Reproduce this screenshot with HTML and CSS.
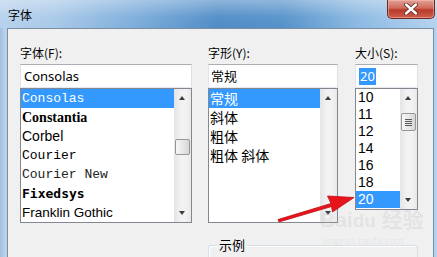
FILE: index.html
```html
<!DOCTYPE html>
<html lang="zh-CN">
<head>
    <meta charset="UTF-8">
    <title>字体</title>
    <link rel="stylesheet" href="styles.css">
</head>
<body>
    <div class="window">
        <div class="titlebar">
            <span class="title">字体</span>
            <div class="close">
                <svg width="16" height="12" viewBox="0 0 16 12">
                    <path d="M3 1.5 L13 10.5 M13 1.5 L3 10.5" stroke="#5a2a26" stroke-width="4" stroke-linecap="round"/>
                    <path d="M3 1.5 L13 10.5 M13 1.5 L3 10.5" stroke="#fff" stroke-width="2.4" stroke-linecap="round"/>
                </svg>
            </div>
        </div>

        <div class="frame">
            <div class="client">
                <div class="cols">
                    <div class="col col-font">
                        <div class="label">字体(F):</div>
                        <div class="textbox">Consolas</div>
                        <div class="listbox tall">
                            <ul class="items">
                                <li class="selected f-consolas">Consolas</li>
                                <li class="f-constantia">Constantia</li>
                                <li class="f-corbel">Corbel</li>
                                <li class="f-courier">Courier</li>
                                <li class="f-couriernew">Courier New</li>
                                <li class="f-fixedsys">Fixedsys</li>
                                <li class="f-franklin">Franklin Gothic</li>
                            </ul>
                            <div class="scrollbar">
                                <span class="arrow-up"></span>
                                <div class="track">
                                    <div class="thumb thumb-font"></div>
                                </div>
                                <span class="arrow-down"></span>
                            </div>
                        </div>
                    </div>

                    <div class="col col-style">
                        <div class="label">字形(Y):</div>
                        <div class="textbox cjk">常规</div>
                        <div class="listbox tall">
                            <ul class="items cjk-items">
                                <li class="selected">常规</li>
                                <li>斜体</li>
                                <li>粗体</li>
                                <li>粗体 斜体</li>
                            </ul>
                            <div class="scrollbar">
                                <span class="arrow-up"></span>
                                <div class="track"></div>
                                <span class="arrow-down"></span>
                            </div>
                        </div>
                    </div>

                    <div class="col col-size">
                        <div class="label">大小(S):</div>
                        <div class="textbox"><span class="sel-text">20</span></div>
                        <div class="listbox short">
                            <ul class="items size-items">
                                <li>10</li>
                                <li>11</li>
                                <li>12</li>
                                <li>14</li>
                                <li>16</li>
                                <li>18</li>
                                <li class="selected">20</li>
                            </ul>
                            <div class="scrollbar">
                                <span class="arrow-up"></span>
                                <div class="track">
                                    <div class="thumb thumb-size">
                                        <span></span><span></span><span></span><span></span>
                                    </div>
                                </div>
                                <span class="arrow-down"></span>
                            </div>
                        </div>
                    </div>
                </div>

                <div class="groupbox">
                    <span class="legend">示例</span>
                </div>
            </div>
        </div>

        <div class="watermark">
            <div class="wm-logo">Bai<span class="wm-du">du</span> 经验</div>
            <div class="wm-url">jingyan.baidu.com</div>
        </div>

        <svg class="red-arrow" width="437" height="257" viewBox="0 0 437 257">
            <path d="M278 219.5 L331 203.5 L327.5 196 L354 197.5 L332.5 212 L331.5 206.5 L279 222 Z" fill="#e8141c" stroke="#c00d12" stroke-width="0.8" stroke-linejoin="round"/>
        </svg>
    </div>
</body>
</html>
```

FILE: styles.css
```css
body {
    margin: 0;
    background: #f0f0f0;
}

.window {
    position: relative;
    width: 437px;
    height: 257px;
    overflow: hidden;
    display: flex;
    flex-direction: column;
    background: linear-gradient(to right, #b6d1ec, #a9c9e8 12%, #7eaedb 30%, #4f8cc6 50%, #5592ca 65%, #8bb9e2 82%, #b4d2ee);
    font-family: "Noto Sans CJK SC", "Noto Sans", sans-serif;
    font-size: 12px;
    color: #000;
}

.titlebar {
    height: 28px;
    flex-shrink: 0;
    display: flex;
    align-items: flex-start;
    justify-content: space-between;
    background: linear-gradient(to bottom, rgba(255, 255, 255, 0.35), rgba(255, 255, 255, 0.05) 60%, rgba(255, 255, 255, 0));
}

.title {
    padding: 7px 0 0 8px;
    line-height: 16px;
    font-size: 12px;
}

.close {
    width: 46px;
    height: 18px;
    margin-right: 2px;
    display: flex;
    align-items: center;
    justify-content: center;
    border: 1px solid #6d2a22;
    border-top: none;
    border-radius: 0 0 5px 5px;
    background: linear-gradient(to bottom, #e3a196, #cf6a5c 45%, #b93a2a 55%, #cf5e4c);
    box-shadow: inset 0 0 0 1px rgba(255, 200, 190, 0.45);
}

.frame {
    flex: 1;
    display: flex;
    padding: 0 3px 0 7px;
    background: linear-gradient(to right, #9fbfe1, #b9d3ec 5px, transparent 8px);
}

.client {
    flex: 1;
    background: #f0f0f0;
    border: 1px solid #7b8ea3;
    border-bottom: none;
    padding: 16px 0 0 12px;
}

.cols {
    display: flex;
    gap: 16px;
}

.col-font {
    width: 172px;
}

.col-style {
    width: 130px;
}

.col-size {
    width: 63px;
    margin-left: 1px;
}

.label {
    height: 16px;
    line-height: 16px;
    margin-bottom: 3px;
}

.textbox {
    height: 24px;
    box-sizing: border-box;
    border: 1px solid #abadb3;
    border-color: #abadb3 #dbdfe6 #e3e9ef #e2e3ea;
    background: #fff;
    padding: 0 3px;
    line-height: 22px;
    font-family: "Noto Sans", "Noto Sans CJK SC", sans-serif;
    font-size: 13px;
}

.textbox.cjk {
    font-family: "Noto Sans CJK SC", sans-serif;
    padding-left: 2px;
}

.sel-text {
    display: inline-block;
    background: #3399ff;
    color: #fff;
    line-height: 17px;
    padding: 0 1px;
}

.listbox {
    display: flex;
    box-sizing: border-box;
    border: 1px solid #828790;
    background: #fff;
}

.listbox.tall {
    height: 135px;
}

.listbox.short {
    height: 122px;
}

.items {
    flex: 1;
    list-style: none;
    margin: 0;
    padding: 0;
    overflow: hidden;
}

.items li {
    height: 19px;
    line-height: 19px;
    padding-left: 1px;
    white-space: nowrap;
}

.items li.selected {
    background: #3399ff;
    color: #fff;
}

.f-consolas {
    font-family: "Liberation Mono", monospace;
    font-size: 13px;
}

.f-constantia {
    font-family: "Liberation Serif", serif;
    font-size: 14px;
    font-weight: bold;
}

.f-corbel {
    font-family: "Liberation Sans", sans-serif;
    font-size: 14px;
}

.f-courier {
    font-family: "Liberation Mono", monospace;
    font-size: 13px;
}

.f-couriernew {
    font-family: "Liberation Mono", monospace;
    font-size: 13px;
    color: #222;
}

.f-fixedsys {
    font-family: "DejaVu Sans Mono", monospace;
    font-size: 13px;
    font-weight: bold;
}

.f-franklin {
    font-family: "Liberation Sans", sans-serif;
    font-size: 13.5px;
}

.cjk-items li {
    font-family: "Noto Sans CJK SC", sans-serif;
    font-size: 14px;
    padding-left: 1px;
}

.size-items li {
    height: 17px;
    line-height: 17px;
    font-family: "Liberation Sans", sans-serif;
    font-size: 14px;
    padding-left: 2px;
}

.scrollbar {
    width: 17px;
    display: flex;
    flex-direction: column;
    background: linear-gradient(to right, #e4e4e4, #f2f2f2 40%, #f2f2f2 70%, #e8e8e8);
}

.arrow-up,
.arrow-down {
    height: 17px;
    flex-shrink: 0;
    position: relative;
}

.arrow-up::after,
.arrow-down::after {
    content: "";
    position: absolute;
    left: 5px;
    top: 7px;
    border-left: 3.5px solid transparent;
    border-right: 3.5px solid transparent;
}

.arrow-up::after {
    border-bottom: 4px solid #3e3e3e;
}

.arrow-down::after {
    top: 6px;
    border-top: 4px solid #3e3e3e;
}

.track {
    flex: 1;
    position: relative;
}

.thumb {
    position: absolute;
    left: 1px;
    right: 1px;
    box-sizing: border-box;
    border: 1px solid #979797;
    border-radius: 2px;
    background: linear-gradient(to right, #f6f6f6, #e8e8e8 50%, #d6d6d6);
}

.thumb-font {
    top: 33px;
    height: 16px;
}

.thumb-size {
    top: 7px;
    height: 18px;
    display: flex;
    flex-direction: column;
    align-items: center;
    justify-content: center;
    gap: 1px;
}

.thumb-size span {
    width: 7px;
    height: 1px;
    background: #5a5a5a;
}

.groupbox {
    position: relative;
    width: 210px;
    height: 40px;
    margin: 22px 0 0 188px;
    box-sizing: border-box;
    border: 1px solid #d5dfe5;
    border-bottom: none;
    border-radius: 3px 3px 0 0;
    box-shadow: inset 1px 1px 0 #fff;
}

.legend {
    position: absolute;
    left: 8px;
    top: -10px;
    padding: 0 2px;
    background: #f0f0f0;
    font-size: 13px;
    line-height: 18px;
}

.watermark {
    position: absolute;
    left: 320px;
    top: 207px;
    pointer-events: none;
    color: rgba(185, 185, 185, 0.22);
}

.wm-logo {
    font-family: "Liberation Sans", "Noto Sans CJK SC", sans-serif;
    font-size: 21px;
    font-weight: bold;
    line-height: 26px;
}

.wm-du {
    font-size: 19px;
}

.wm-url {
    font-family: "Liberation Serif", serif;
    font-size: 11px;
    line-height: 12px;
    padding-left: 2px;
}

.red-arrow {
    position: absolute;
    top: 0;
    left: 0;
    pointer-events: none;
}
```
